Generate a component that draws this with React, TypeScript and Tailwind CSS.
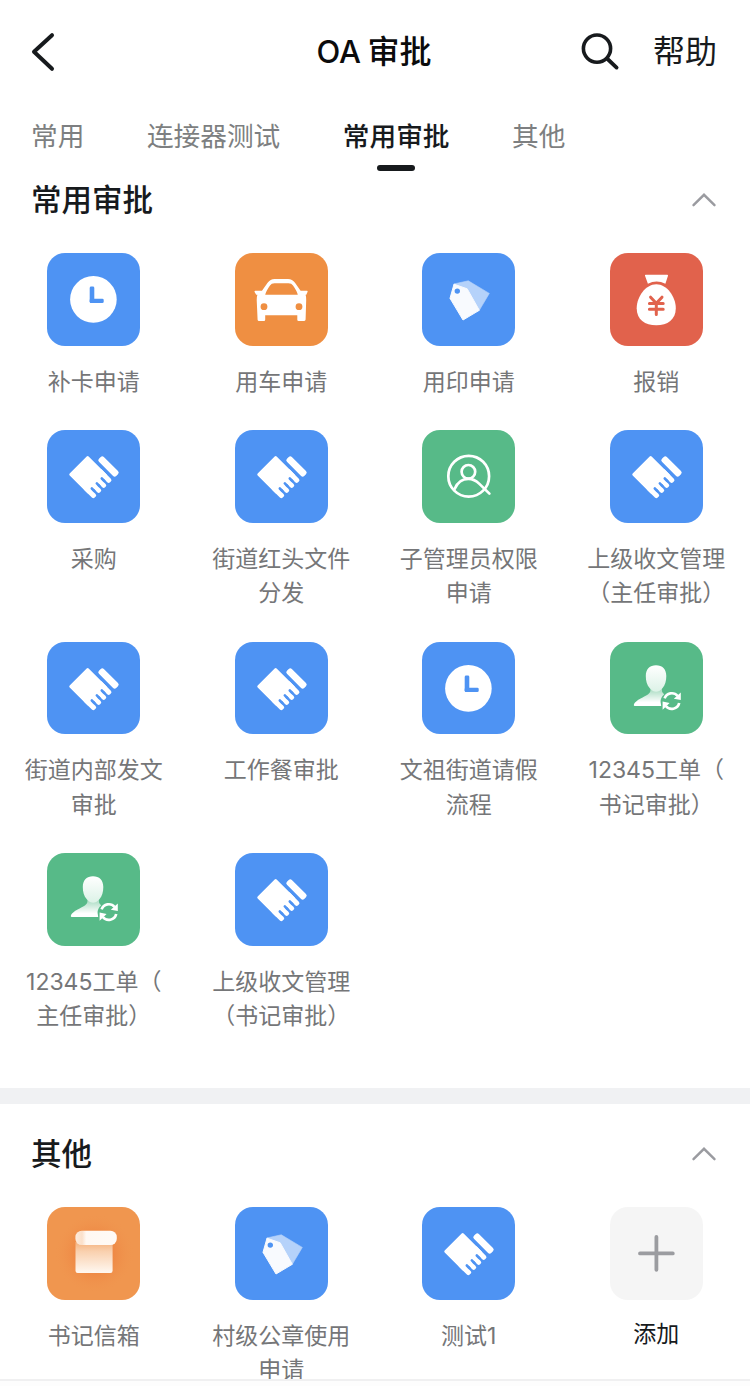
import { useState } from 'react';
import type { ReactNode } from 'react';

type IconName = 'clock' | 'car' | 'tag' | 'money' | 'hand' | 'admin' | 'transfer' | 'scroll' | 'plus';

interface AppItem {
  icon: IconName;
  lines: string[];
}

const TABS = ['常用', '连接器测试', '常用审批', '其他'];

const COMMON_APPS: AppItem[] = [
  { icon: 'clock', lines: ['补卡申请'] },
  { icon: 'car', lines: ['用车申请'] },
  { icon: 'tag', lines: ['用印申请'] },
  { icon: 'money', lines: ['报销'] },
  { icon: 'hand', lines: ['采购'] },
  { icon: 'hand', lines: ['街道红头文件', '分发'] },
  { icon: 'admin', lines: ['子管理员权限', '申请'] },
  { icon: 'hand', lines: ['上级收文管理', '（主任审批）'] },
  { icon: 'hand', lines: ['街道内部发文', '审批'] },
  { icon: 'hand', lines: ['工作餐审批'] },
  { icon: 'clock', lines: ['文祖街道请假', '流程'] },
  { icon: 'transfer', lines: ['12345工单（', '书记审批）'] },
  { icon: 'transfer', lines: ['12345工单（', '主任审批）'] },
  { icon: 'hand', lines: ['上级收文管理', '（书记审批）'] },
];

const OTHER_APPS: AppItem[] = [
  { icon: 'scroll', lines: ['书记信箱'] },
  { icon: 'tag', lines: ['村级公章使用', '申请'] },
  { icon: 'hand', lines: ['测试1'] },
  { icon: 'plus', lines: ['添加'] },
];

const TILE_COLORS: Record<IconName, string> = {
  clock: 'bg-[#4e93f3]',
  tag: 'bg-[#4e93f3]',
  hand: 'bg-[#4e93f3]',
  car: 'bg-[#ef8f42]',
  money: 'bg-[#e1624c]',
  admin: 'bg-[#57ba88]',
  transfer: 'bg-[#57ba88]',
  scroll: 'bg-[#f0964f]',
  plus: 'bg-[#f5f5f5]',
};

const GLYPHS: Record<IconName, ReactNode> = {
  clock: (
    <>
      <circle cx="46.4" cy="46.4" r="23.3" fill="#fff" />
      <rect x="42.7" y="33.6" width="4.6" height="16.5" rx="1.4" fill="#4e93f3" />
      <rect x="42.7" y="45.7" width="14" height="4.4" rx="1.4" fill="#4e93f3" />
    </>
  ),
  car: (
    <>
      <path
        fill="#fff"
        fillRule="evenodd"
        d="M20.3 37.7H27L32.6 29.8Q35.3 26 39.6 26H53Q57.4 26 60 29.8L65.6 37.7H72Q73 37.8 72.5 39L71.3 41.8H70.6Q71.3 44 71.2 47L70.6 66.6Q70.5 68 69.2 68H63.6Q62.3 68 62.3 66.7V62.3H30.2V66.7Q30.2 68 28.9 68H24Q22.7 68 22.6 66.7L21.7 47Q21.6 44 22.4 41.8H21.2L19.6 39Q19.2 37.8 20.3 37.7ZM30.2 41.8H62.8Q62 38 58 32.4Q56.6 30.2 53.5 30.2H39.5Q36.4 30.2 35 32.4Q31 38 30.2 41.8Z"
      />
      <circle cx="29" cy="53.7" r="3.4" fill="#ef8f42" />
      <circle cx="64" cy="53.7" r="3.4" fill="#ef8f42" />
    </>
  ),
  tag: (
    <>
      <path d="M31.7 31L46.3 27.8L67.3 40.4L57.3 57.3L40 60Z" fill="#b5d2fa" stroke="#b5d2fa" strokeWidth=".6" strokeLinejoin="round" />
      <path d="M32 31.2L45.2 35.8L57.3 57.3L41 67L28 45.3Z" fill="#f8fafe" stroke="#f8fafe" strokeWidth="1" strokeLinejoin="round" />
      <circle cx="35.3" cy="38.1" r="2.7" fill="#4e93f3" />
    </>
  ),
  money: (
    <>
      <path d="M35.7 21.7H57.2Q58.2 21.7 58 22.8L55.4 30.8Q46.5 26.2 37.9 30.8L35 22.8Q34.8 21.7 35.7 21.7Z" fill="#fff" />
      <path d="M46.3 31.3C57 31.3 65.8 44 65.8 55.2C65.8 66.5 57.5 72.3 46.3 72.3C35 72.3 26.7 66.5 26.7 55.2C26.7 44 35.6 31.3 46.3 31.3Z" fill="#fff" />
      <path
        d="M40.6 44.2L46.3 50.3L52 44.2M46.3 50.3V61.6M39.4 50.6H53.2M39.4 56.2H53.2"
        fill="none"
        stroke="#e1624c"
        strokeWidth="3"
        strokeLinecap="round"
      />
    </>
  ),
  hand: (
    <g transform="translate(21.7 44.4) rotate(45)" fill="#fff">
      <rect x="0" y="-26.8" width="28" height="26.8" rx="1.4" />
      <rect x="20" y="-5.2" width="14.8" height="5.2" rx="2" />
      <rect x="20" y="-12.3" width="14.8" height="4.7" rx="2" />
      <rect x="20" y="-19.4" width="14.8" height="4.7" rx="2" />
      <rect x="18" y="-26.8" width="16.8" height="5.1" rx="2" />
      <path d="M26.3 -6.4H30M26.3 -13.5H30M26.3 -20.5H30" stroke="#4e93f3" strokeWidth="2.6" strokeLinecap="round" />
      <rect x="10.3" y="-37.2" width="24.4" height="6.9" rx="2.2" />
    </g>
  ),
  admin: (
    <g fill="none" stroke="#fff" strokeWidth="2.7" strokeLinecap="round">
      <circle cx="46.7" cy="46.2" r="20.4" />
      <circle cx="46.4" cy="41.8" r="6.8" />
      <path d="M32.6 59C35.4 52.5 39.5 48.9 46.4 48.9C51 48.9 54 50.6 57.4 53.9L67.4 63.6" />
    </g>
  ),
  transfer: (
    <>
      <defs>
        <linearGradient id="head" x1="0" y1="0" x2="0" y2="1">
          <stop offset="0" stopColor="#fff" />
          <stop offset="1" stopColor="#dcf2e7" />
        </linearGradient>
        <linearGradient id="body" x1="0" y1="0" x2="0" y2="1">
          <stop offset="0" stopColor="#fff" stopOpacity=".45" />
          <stop offset=".8" stopColor="#fff" />
        </linearGradient>
      </defs>
      <path d="M40.4 46H52V49.6Q52.7 51.2 54.2 52.2Q50.3 55.6 50.6 60L51.2 64H24.6Q23.5 64 23.9 62.6C24.8 59.6 28.6 57.4 32.6 55.4C37.2 53.1 40.4 51.6 40.4 48.6Z" fill="url(#body)" />
      <path d="M46 23.3C52.4 23.3 56.3 27.3 56.3 34C56.3 39 55.2 43 52.4 46.2C48.2 51 44 51 39.8 46.2C36.9 43 35.8 39 35.8 34C35.8 27.3 39.8 23.3 46 23.3Z" fill="url(#head)" />
      <g fill="none" stroke="#fff" strokeWidth="2.7">
        <path d="M54.6 56.4A7.6 7.6 0 0 1 67.6 54" />
        <path d="M69.2 61A7.6 7.6 0 0 1 55.8 64" />
      </g>
      <path d="M70.8 50.4V58L63.8 56.8ZM52.6 67.7V59.4L59.6 61Z" fill="#fff" />
    </>
  ),
  scroll: (
    <>
      <defs>
        <radialGradient id="glow">
          <stop offset=".4" stopColor="#ee8542" />
          <stop offset="1" stopColor="#f0964f" stopOpacity="0" />
        </radialGradient>
        <linearGradient id="sheet" x1="0" y1="0" x2="0" y2="1">
          <stop offset="0" stopColor="#f5b27e" />
          <stop offset=".3" stopColor="#f9d0ae" />
          <stop offset="1" stopColor="#fff8f1" />
        </linearGradient>
        <linearGradient id="roll" x1="0" y1="0" x2="1" y2="0">
          <stop offset="0" stopColor="#fdebdc" />
          <stop offset=".16" stopColor="#fbe0ca" />
          <stop offset=".26" stopColor="#fff8f2" />
          <stop offset="1" stopColor="#fffaf5" />
        </linearGradient>
      </defs>
      <circle cx="47.5" cy="46.5" r="40" fill="url(#glow)" />
      <path d="M28.5 35H65.6V63.8Q65.6 66 63.4 66H30.7Q28.5 66 28.5 63.8Z" fill="url(#sheet)" />
      <rect x="28.4" y="23.7" width="41.4" height="14.4" rx="6.4" fill="url(#roll)" />
    </>
  ),
  plus: <path d="M46.4 30V62.8M30 46.4H62.8" stroke="#9b9ca0" strokeWidth="3.8" strokeLinecap="round" />,
};

function AppTile({ icon, lines }: AppItem) {
  const isAdd = icon === 'plus';

  return (
    <button className="flex flex-col items-center pb-[31px]">
      <span className={`block h-[92.5px] w-[93px] overflow-hidden rounded-[18px] ${TILE_COLORS[icon]}`}>
        <svg viewBox="0 0 93 92.5" className="block h-full w-full">
          {GLYPHS[icon]}
        </svg>
      </span>
      <span
        className={`text-[23px] leading-[34.5px] ${
          isAdd ? 'mt-[17.5px] text-[#171a1d]' : 'mt-[19px] text-[#757678]'
        }`}
      >
        {lines.map((line) => (
          <span key={line} className="block whitespace-nowrap">
            {line}
          </span>
        ))}
      </span>
    </button>
  );
}

function Section({ title, apps }: { title: string; apps: AppItem[] }) {
  const [open, setOpen] = useState(true);

  return (
    <section>
      <div className="flex h-12 items-center justify-between pl-[31px] pr-[33px]">
        <h2 className="pb-[3px] font-['Noto_Sans_CJK_SC',sans-serif] text-[30.5px] font-medium leading-[45px] text-[#171a1d]">
          {title}
        </h2>
        <button onClick={() => setOpen(!open)} aria-label={title}>
          <svg width="26" height="16" viewBox="0 0 26 16" fill="none" className={open ? '' : 'rotate-180'}>
            <path d="M2.5 13.2L13 2.8L23.5 13.2" stroke="#9a9ba0" strokeWidth="2.4" strokeLinecap="round" />
          </svg>
        </button>
      </div>
      {open && (
        <div className="mt-[29px] grid grid-cols-4">
          {apps.map((app, i) => (
            <AppTile key={i} {...app} />
          ))}
        </div>
      )}
    </section>
  );
}

export default function App() {
  const [activeTab, setActiveTab] = useState('常用审批');

  return (
    <div className="flex h-[1386px] w-[750px] flex-col overflow-hidden bg-white font-[Inter,'Noto_Sans_CJK_SC',sans-serif]">
      <div className="h-[1378.5px] shrink-0">
        {/* Header */}
        <header className="grid h-[104px] grid-cols-3 items-center pl-[31px] pr-[33px]">
          <button className="justify-self-start" aria-label="返回">
            <svg width="26" height="42" viewBox="0 0 26 42" fill="none">
              <path d="M21 4.2L3 20.8L21 37.8" stroke="#171a1d" strokeWidth="4" strokeLinecap="round" strokeLinejoin="round" />
            </svg>
          </button>
          <h1 className="justify-self-center whitespace-nowrap text-[32px] font-medium leading-[48px] text-[#0b0b0c] [word-spacing:-2px]">
            <span className="text-[31px]">OA</span> 审批
          </h1>
          <div className="flex items-center gap-[33px] justify-self-end">
            <svg width="40" height="40" viewBox="0 0 40 40" fill="none">
              <circle cx="17" cy="16.6" r="13.6" stroke="#171a1d" strokeWidth="3.6" />
              <path d="M27 26.5L36.6 35.6" stroke="#171a1d" strokeWidth="3.8" strokeLinecap="round" />
            </svg>
            <button className="text-[32px] leading-[50px] text-[#171a1d]">帮助</button>
          </div>
        </header>

        {/* Tabs */}
        <nav className="flex h-[72px] items-start gap-[62.5px] pl-[31px]">
          {TABS.map((tab) => {
            const active = tab === activeTab;
            return (
              <button
                key={tab}
                onClick={() => setActiveTab(tab)}
                className={`flex flex-col items-center text-[26.7px] ${
                  active ? 'font-medium text-[#171a1d]' : 'text-[#7d7f81]'
                }`}
              >
                <span className="mt-3 leading-10">{tab}</span>
                {active && <span className="mt-[8.5px] h-1.5 w-[38px] rounded-full bg-[#171a1d]" />}
              </button>
            );
          })}
        </nav>

        <Section title="常用审批" apps={COMMON_APPS} />

        <div className="mt-[23.5px] mb-[26.5px] h-[15.5px] bg-[#f0f1f3]" />

        <Section title="其他" apps={OTHER_APPS} />
      </div>
      <div className="h-[7.5px] border-t-2 border-[#f0f0f1] bg-[#fdfdfd]" />
    </div>
  );
}
